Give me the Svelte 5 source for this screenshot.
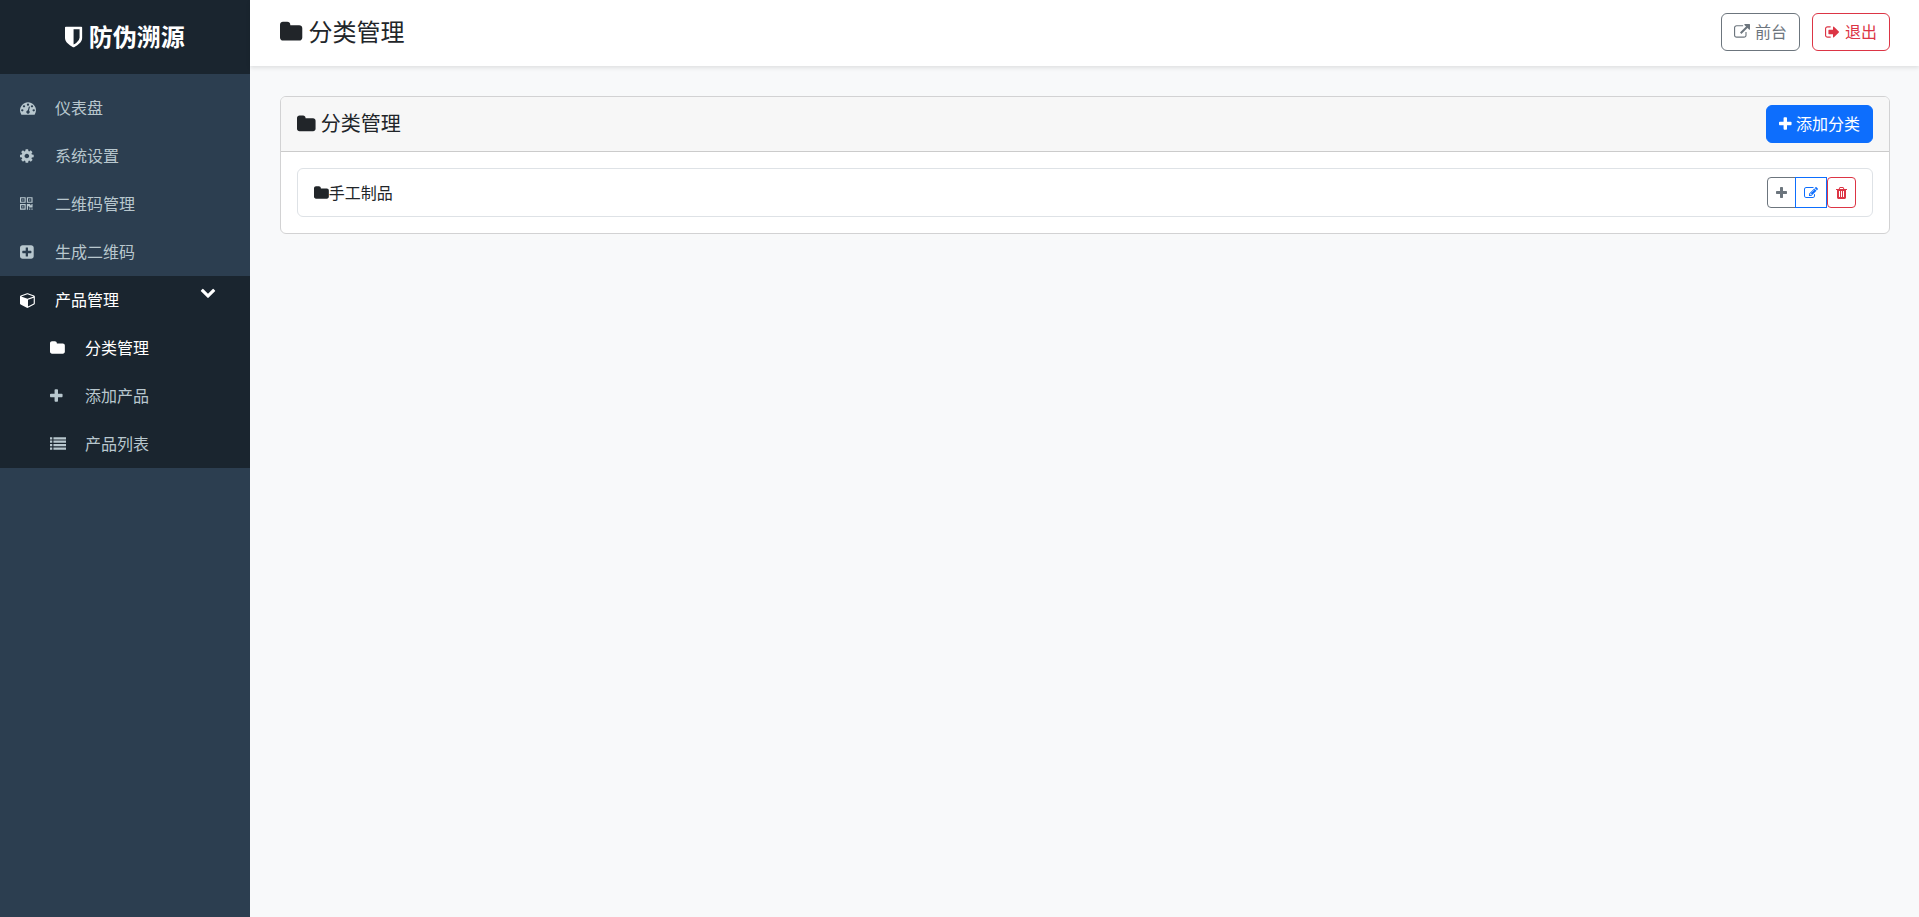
<script>
    const icons = {
        shield: {x: 256, w: 1280, d: 'M1344 960v-640h-448v1137q119-63 213-137 235-184 235-360zm192-768v768q0 86-33.5 170.5t-83 150-118 127.5-126.5 103-121 77.5-89.5 49.5-42.5 20q-12 6-26 6t-26-6q-16-7-42.5-20t-89.5-49.5-121-77.5-126.5-103-118-127.5-83-150-33.5-170.5v-768q0-26 19-45t45-19h1152q26 0 45 19t19 45z'},
        dashboard: {x: 0, w: 1792, d: 'M384 1152q0-53-37.5-90.5t-90.5-37.5-90.5 37.5-37.5 90.5 37.5 90.5 90.5 37.5 90.5-37.5 37.5-90.5zm192-448q0-53-37.5-90.5t-90.5-37.5-90.5 37.5-37.5 90.5 37.5 90.5 90.5 37.5 90.5-37.5 37.5-90.5zm428 481l101-382q6-26-7.5-48.5t-38.5-29.5-48 6.5-30 39.5l-101 382q-60 5-107 43.5t-63 98.5q-20 77 20 146t117 89 146-20 89-117q16-60-6-117t-72-91zm660-33q0-53-37.5-90.5t-90.5-37.5-90.5 37.5-37.5 90.5 37.5 90.5 90.5 37.5 90.5-37.5 37.5-90.5zm-640-640q0-53-37.5-90.5t-90.5-37.5-90.5 37.5-37.5 90.5 37.5 90.5 90.5 37.5 90.5-37.5 37.5-90.5zm448 192q0-53-37.5-90.5t-90.5-37.5-90.5 37.5-37.5 90.5 37.5 90.5 90.5 37.5 90.5-37.5 37.5-90.5zm320 448q0 261-141 483-19 29-54 29h-1402q-35 0-54-29-141-221-141-483 0-182 71-348t191-286 286-191 348-71 348 71 286 191 191 286 71 348z'},
        cog: {x: 128, w: 1536, d: 'M1152 896q0-106-75-181t-181-75-181 75-75 181 75 181 181 75 181-75 75-181zm512-109v222q0 12-8 23t-20 13l-185 28q-19 54-39 91 35 50 107 138 10 12 10 25t-9 23q-27 37-99 108t-94 71q-12 0-26-9l-138-108q-44 23-91 38-16 136-29 186-7 28-36 28h-222q-14 0-24.5-8.500t-11.5-21.5l-28-184q-49-16-90-37l-141 107q-10 9-25 9-14 0-25-11-126-114-165-168-7-10-7-23 0-12 8-23 15-21 51-66.500t54-70.500q-27-50-41-99l-183-27q-13-2-21-12.500t-8-23.500v-222q0-12 8-23t19-13l186-28q14-46 39-92-40-57-107-138-10-12-10-24 0-10 9-23 26-36 98.500-107.500t94.500-71.500q13 0 26 10l138 107q44-23 91-38 16-136 29-186 7-28 36-28h222q14 0 24.500 8.500t11.500 21.500l28 184q49 16 90 37l142-107q9-9 24-9 13 0 25 10 129 119 165 170 7 8 7 22 0 12-8 23-15 21-51 66.500t-54 70.500q26 50 41 98l183 28q13 2 21 12.500t8 23.500z'},
        qrcode: {x: 0, w: 1408, d: 'M384 1152v128h-128v-128h128zm0-768v128h-128v-128h128zm768 0v128h-128v-128h128zm-1024 1023h384v-383h-384v383zm0-767h384v-384h-384v384zm768 0h384v-384h-384v384zm-256 256v640h-640v-640h640zm512 512v128h-128v-128h128zm256 0v128h-128v-128h128zm0-512v384h-384v-128h-128v384h-128v-640h384v128h128v-128h128zm-768-768v640h-640v-640h640zm768 0v640h-640v-640h640z'},
        plusSquare: {x: 128, w: 1536, d: 'M1408 960v-128q0-26-19-45t-45-19h-320v-320q0-26-19-45t-45-19h-128q-26 0-45 19t-19 45v320h-320q-26 0-45 19t-19 45v128q0 26 19 45t45 19h320v320q0 26 19 45t45 19h128q26 0 45-19t19-45v-320h320q26 0 45-19t19-45zm256-544v960q0 119-84.5 203.5t-203.5 84.5h-960q-119 0-203.5-84.5t-84.5-203.5v-960q0-119 84.5-203.5t203.5-84.5h960q119 0 203.5 84.5t84.5 203.5z'},
        cube: {x: 0, w: 1664, d: 'M896 1629l640-349v-636l-640 233v752zm-64-865l698-254-698-254-698 254zm832-252v768q0 35-18 65t-49 47l-704 384q-28 16-61 16t-61-16l-704-384q-31-17-49-47t-18-65v-768q0-40 23-73t61-47l704-256q22-8 44-8t44 8l704 256q38 14 61 47t23 73z'},
        folder: {x: 64, w: 1664, d: 'M1728 608v704q0 92-66 158t-158 66h-1216q-92 0-158-66t-66-158v-960q0-92 66-158t158-66h320q92 0 158 66t66 158v32h672q92 0 158 66t66 158z'},
        plus: {x: 192, w: 1408, d: 'M1600 736v192q0 40-28 68t-68 28h-416v416q0 40-28 68t-68 28h-192q-40 0-68-28t-28-68v-416h-416q-40 0-68-28t-28-68v-192q0-40 28-68t68-28h416v-416q0-40 28-68t68-28h192q40 0 68 28t28 68v416h416q40 0 68 28t28 68z'},
        list: {x: 0, w: 1792, d: 'M0 1280h256v256h-256zM0 896h256v256h-256zM0 512h256v256h-256zM0 128h256v256h-256zM384 1280h1408v256h-1408zM384 896h1408v256h-1408zM384 512h1408v256h-1408zM384 128h1408v256h-1408z'},
        chevron: {x: 0, w: 1792, d: 'M1683 808l-742 741q-19 19-45 19t-45-19l-742-741q-19-19-19-45.5t19-45.5l166-165q19-19 45-19t45 19l531 531 531-531q19-19 45-19t45 19l166 165q19 19 19 45.5t-19 45.5z'},
        external: {x: 0, w: 1792, d: 'M1408 928v320q0 119-84.5 203.5t-203.5 84.5h-832q-119 0-203.5-84.5t-84.5-203.5v-832q0-119 84.5-203.5t203.5-84.5h704q14 0 23 9t9 23v64q0 14-9 23t-23 9h-704q-66 0-113 47t-47 113v832q0 66 47 113t113 47h832q66 0 113-47t47-113v-320q0-14 9-23t23-9h64q14 0 23 9t9 23zm384-864v512q0 26-19 45t-45 19-45-19l-176-176-652 652q-10 10-23 10t-23-10l-114-114q-10-10-10-23t10-23l652-652-176-176q-19-19-19-45t19-45 45-19h512q26 0 45 19t19 45z'},
        signOut: {x: 64, w: 1664, d: 'M704 1440q0 4 1 20t.5 26.5-3 23.5-10 19.5-20.5 6.5h-320q-119 0-203.5-84.5t-84.5-203.5v-704q0-119 84.5-203.5t203.5-84.5h320q13 0 22.5 9.5t9.5 22.5q0 4 1 20t.5 26.5-3 23.5-10 19.5-20.5 6.5h-320q-66 0-113 47t-47 113v704q0 66 47 113t113 47h312l11.5 1 11.5 3 8 5.5 7 9 2 13.5zm928-544q0 26-19 45l-544 544q-19 19-45 19t-45-19-19-45v-288h-448q-26 0-45-19t-19-45v-384q0-26 19-45t45-19h448v-288q0-26 19-45t45-19 45 19l544 544q19 19 19 45z'},
        edit: {x: 0, w: 1792, d: 'M888 1184l116-116-152-152-116 116v56h96v96h56zm440-720q-16-16-33 1l-350 350q-17 17-1 33t33-1l350-350q17-17 1-33zm80 594v190q0 119-84.5 203.5t-203.5 84.5h-832q-119 0-203.5-84.5t-84.5-203.5v-832q0-119 84.5-203.5t203.5-84.5h832q63 0 117 25 15 7 18 23 3 17-9 29l-49 49q-14 14-32 8-23-6-45-6h-832q-66 0-113 47t-47 113v832q0 66 47 113t113 47h832q66 0 113-47t47-113v-126q0-13 9-22l64-64q15-15 35-7t20 29zm-96-738l288 288-672 672h-288v-288zm444 132l-92 92-288-288 92-92q28-28 68-28t68 28l152 152q28 28 28 68t-28 68z'},
        trash: {x: 192, w: 1408, d: 'M704 1376v-704q0-14-9-23t-23-9h-64q-14 0-23 9t-9 23v704q0 14 9 23t23 9h64q14 0 23-9t9-23zm256 0v-704q0-14-9-23t-23-9h-64q-14 0-23 9t-9 23v704q0 14 9 23t23 9h64q14 0 23-9t9-23zm256 0v-704q0-14-9-23t-23-9h-64q-14 0-23 9t-9 23v704q0 14 9 23t23 9h64q14 0 23-9t9-23zm-544-992h448l-48-117q-7-9-17-11h-317q-10 2-17 11zm928 32v64q0 14-9 23t-23 9h-96v948q0 83-47 143.5t-113 60.5h-832q-66 0-113-58.5t-47-141.5v-952h-96q-14 0-23-9t-9-23v-64q0-14 9-23t23-9h309l70-167q15-37 54-63t79-26h320q40 0 79 26t54 63l70 167h309q14 0 23 9t9 23z'},
    }

    const menu = [
        {name: '仪表盘', icon: 'dashboard'},
        {name: '系统设置', icon: 'cog'},
        {name: '二维码管理', icon: 'qrcode'},
        {name: '生成二维码', icon: 'plusSquare'},
    ]

    const productMenu = [
        {name: '分类管理', icon: 'folder', active: true},
        {name: '添加产品', icon: 'plus'},
        {name: '产品列表', icon: 'list'},
    ]

    const categories = ['手工制品']

    let open = $state(true)
</script>

{#snippet icon(name)}
    <svg class="icon" viewBox="{icons[name].x} 0 {icons[name].w} 1792" aria-hidden="true"><path d={icons[name].d} /></svg>
{/snippet}

<div class="layout">
    <aside class="sidebar">
        <div class="brand">{@render icon('shield')} 防伪溯源</div>
        <nav>
            {#each menu as item (item.name)}
                <a class="link" href="#menu">
                    <span class="slot">{@render icon(item.icon)}</span>
                    {item.name}
                </a>
            {/each}
            <div class="group">
                <button class="link active" aria-expanded={open} onclick={() => open = !open}>
                    <span class="slot">{@render icon('cube')}</span>
                    产品管理
                    <span class="arrow">{@render icon('chevron')}</span>
                </button>
                {#if open}
                    {#each productMenu as item (item.name)}
                        <a class="link sub" class:active={item.active} href="#product">
                            <span class="slot">{@render icon(item.icon)}</span>
                            {item.name}
                        </a>
                    {/each}
                {/if}
            </div>
        </nav>
    </aside>

    <div class="content">
        <header class="topbar">
            <h1>{@render icon('folder')} 分类管理</h1>
            <div class="actions">
                <a class="btn secondary" href="#front">{@render icon('external')} 前台</a>
                <a class="btn danger" href="#logout">{@render icon('signOut')} 退出</a>
            </div>
        </header>

        <main>
            <section class="card">
                <div class="cardHeader">
                    <h2>{@render icon('folder')} 分类管理</h2>
                    <button class="btn primary">{@render icon('plus')} 添加分类</button>
                </div>
                <ul class="list">
                    {#each categories as category (category)}
                        <li>
                            <span>{@render icon('folder')}{category}</span>
                            <div class="btnGroup">
                                <button class="btn small secondary" aria-label="添加">{@render icon('plus')}</button>
                                <button class="btn small outline" aria-label="编辑">{@render icon('edit')}</button>
                                <button class="btn small danger" aria-label="删除">{@render icon('trash')}</button>
                            </div>
                        </li>
                    {/each}
                </ul>
            </section>
        </main>
    </div>
</div>

<style>
    :global(body){
        margin: 0;
        background-color: #f8f9fa;
    }

    .layout{
        display: flex;
        min-height: 100vh;
        font-family: "Open Sans", "Noto Sans CJK SC", sans-serif;
        font-size: 16px;
        line-height: 24px;
        color: #212529;
    }

    .layout *{
        box-sizing: border-box;
    }

    .icon{
        height: 1em;
        fill: currentColor;
        vertical-align: -2px;
        overflow: visible;
    }

    .sidebar{
        width: 250px;
        flex-shrink: 0;
        background-color: #2c3e50;
    }

    .brand{
        padding: 22px 20px;
        background-color: #1a252f;
        color: #fff;
        font-size: 24px;
        line-height: 30px;
        font-weight: 700;
        text-align: center;
    }

    nav{
        padding: 10px 0;
    }

    .link{
        display: flex;
        width: 100%;
        padding: 12px 20px;
        border: 0;
        background: none;
        color: #b8c7ce;
        font: inherit;
        text-align: left;
        text-decoration: none;
        cursor: pointer;
    }

    .link.sub{
        padding-left: 50px;
    }

    .link.active{
        color: #fff;
    }

    .slot{
        width: 35px;
    }

    .group{
        background-color: #1a252f;
    }

    .arrow{
        margin: -8px 14px 0 auto;
    }

    .content{
        flex: 1;
        min-width: 0;
    }

    .topbar{
        display: flex;
        justify-content: space-between;
        align-items: center;
        height: 66px;
        padding: 0 29px 2px 30px;
        background-color: #fff;
        box-shadow: 0 2px 4px rgba(0, 0, 0, 0.1);
    }

    h1, h2{
        margin: 0;
        font-weight: 400;
    }

    h1{
        font-size: 24px;
        line-height: 28px;
    }

    h2{
        font-size: 20px;
        line-height: 24px;
    }

    h1 .icon, h2 .icon, .brand .icon{
        vertical-align: -3px;
    }

    .actions{
        display: flex;
        gap: 12px;
    }

    .actions .icon{
        margin-right: 1px;
    }

    .btn{
        padding: 6px 12px;
        border: 1px solid currentColor;
        border-radius: 6px;
        background-color: #fff;
        font: inherit;
        text-decoration: none;
        cursor: pointer;
    }

    .secondary{
        color: #6c757d;
    }

    .danger{
        color: #dc3545;
    }

    .outline{
        color: #0d6efd;
    }

    .primary{
        border-color: #0d6efd;
        background-color: #0d6efd;
        color: #fff;
    }

    main{
        padding: 30px 29px 30px 30px;
    }

    .card{
        border: 1px solid #d2d2d3;
        border-radius: 6px;
        background-color: #fff;
    }

    .cardHeader{
        display: flex;
        justify-content: space-between;
        align-items: center;
        padding: 8px 16px;
        border-bottom: 1px solid #cbcbcb;
        border-radius: 5px 5px 0 0;
        background-color: #f7f7f7;
    }

    .list{
        margin: 0;
        padding: 16px;
        list-style: none;
    }

    .list li{
        display: flex;
        justify-content: space-between;
        align-items: center;
        padding: 8px 16px;
        border: 1px solid #dee2e6;
        border-radius: 6px;
    }

    .btnGroup{
        display: flex;
    }

    .small{
        padding: 4px 8px;
        border-radius: 4px;
        font-size: 14px;
        line-height: 21px;
    }

    .small:first-child{
        border-radius: 4px 0 0 4px;
    }

    .small.outline{
        margin-left: -1px;
        border-radius: 0;
    }
</style>
